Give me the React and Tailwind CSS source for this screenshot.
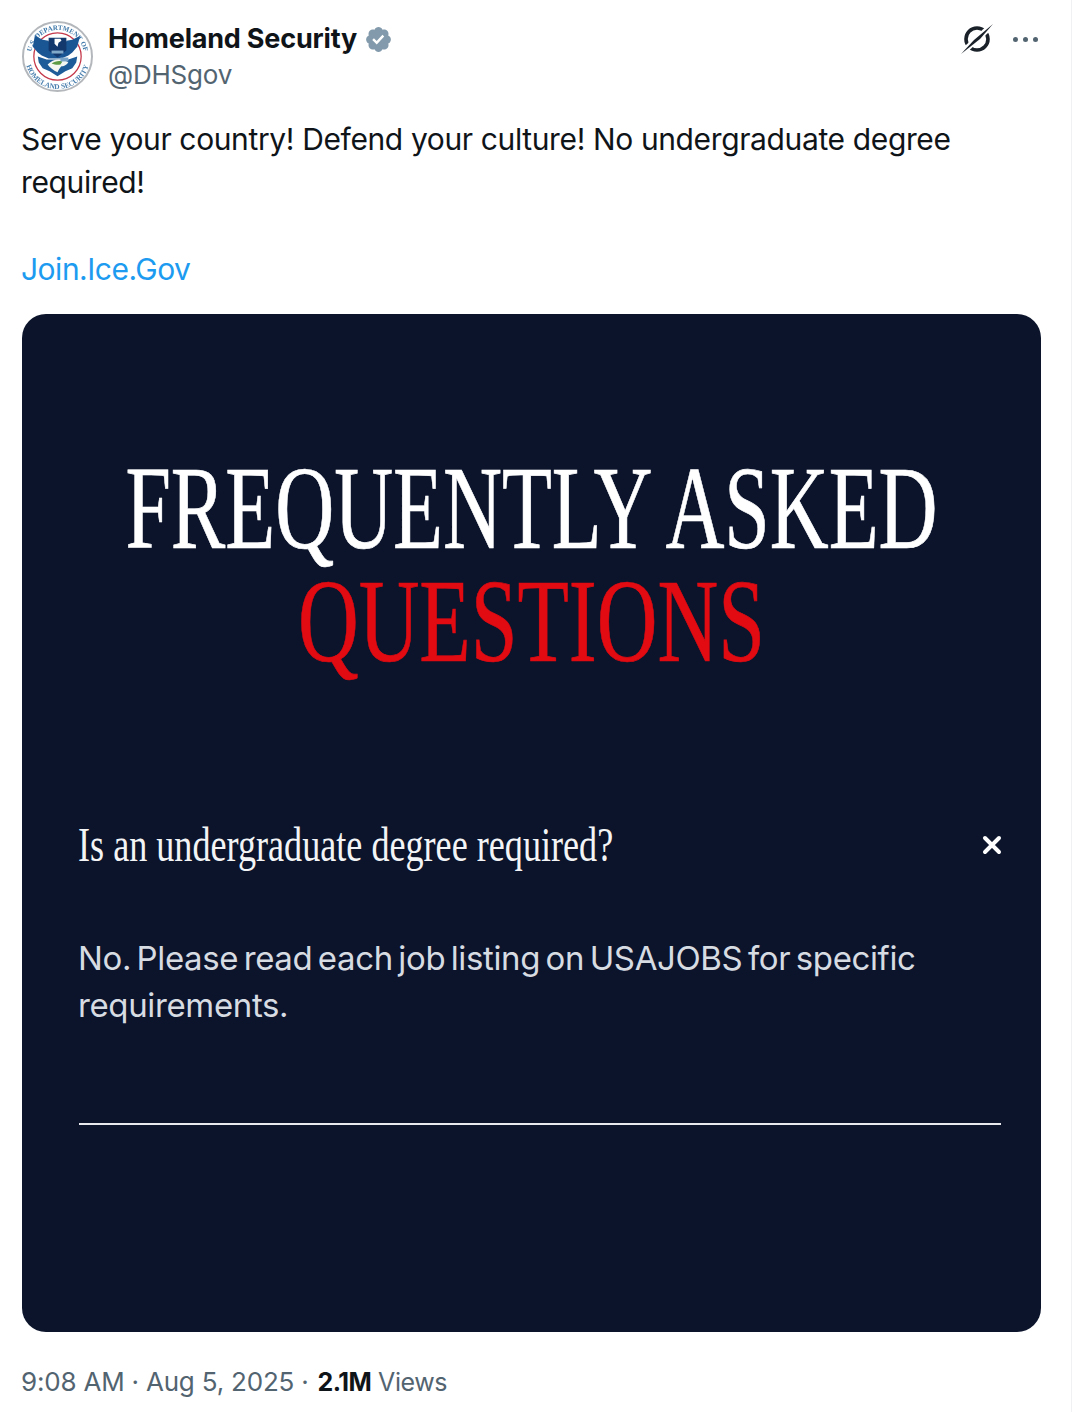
const Seal = () => (
  <svg viewBox="0 0 72 72" className="w-[71px] h-[71px] shrink-0 blur-[0.3px]">
    <circle cx="36" cy="36" r="35" fill="#fff" stroke="#b4b8bc" strokeWidth="2" />
    <circle cx="36" cy="36" r="24" fill="#fff" stroke="#c4384a" strokeWidth="1.3" />
    <defs>
      <path id="sealTop" d="M9 36a27 27 0 0 1 54 0" />
      <path id="sealBottom" d="M3 36a33 33 0 0 0 66 0" />
    </defs>
    <text fontSize="7" fontWeight="700" fill="#3c76a8" fontFamily="Liberation Serif, serif">
      <textPath href="#sealTop" startOffset="50%" textAnchor="middle">U.S. DEPARTMENT OF</textPath>
    </text>
    <text fontSize="7.4" fontWeight="700" fill="#4a7fae" fontFamily="Liberation Serif, serif">
      <textPath href="#sealBottom" startOffset="50%" textAnchor="middle">HOMELAND SECURITY</textPath>
    </text>
    {/* eagle wings */}
    <path d="M13 15l8 4 6 1 2 8h14l2-8 6-1 8-4-3 11-5 6-4 3-7 3h-13l-7-3-4-3-5-6z" fill="#1b5694" />
    <path d="M27 17h18v13l-9 7-9-7z" fill="#12386e" />
    <path d="M33 18h6l1 2-3 2-1 4-3-3z" fill="#fff" />
    <path d="M30 30h12v3h-12z" fill="#7fa8c9" />
    {/* lower shield */}
    <path d="M16 36l9 3h22l9-3-1 6-4 6-7 3-8 5-8-5-7-3-4-6z" fill="#1d5c98" />
    <path d="M26 44c3-3 7-5 11-5 4 0 8 1 10 3-2 3-5 4-7 4-2 2-3 4-4 6-4-2-8-5-10-8z" fill="#f4f6f2" />
    <path d="M30 43c3-2 7-3 11-2l-2 3c-3 1-6 0-9-1z" fill="#5d9a45" />
    <path d="M39 37h8v4h-8z" fill="#7aa3c8" />
  </svg>
);

const Verified = () => (
  <svg viewBox="0 0 22 22" className="w-[29px] h-[29px] shrink-0">
    <path
      fill="#829aab"
      d="M20.396 11c-.018-.646-.215-1.275-.57-1.816-.354-.54-.852-.972-1.438-1.246.223-.607.27-1.264.14-1.897-.131-.634-.437-1.218-.882-1.687-.47-.445-1.053-.75-1.687-.882-.633-.13-1.29-.083-1.897.14-.273-.587-.704-1.086-1.245-1.44S11.647 1.62 11 1.604c-.646.017-1.273.213-1.813.568s-.969.854-1.24 1.44c-.608-.223-1.267-.272-1.902-.14-.635.13-1.22.436-1.69.882-.445.47-.749 1.055-.878 1.688-.13.633-.08 1.29.144 1.896-.587.274-1.087.705-1.443 1.245-.356.54-.555 1.17-.574 1.817.02.647.218 1.276.574 1.817.356.54.856.972 1.443 1.245-.224.606-.274 1.263-.144 1.896.13.634.433 1.218.877 1.688.47.443 1.054.747 1.687.878.633.132 1.29.084 1.897-.136.274.586.705 1.084 1.246 1.439.54.354 1.17.551 1.816.569.647-.016 1.276-.213 1.817-.567s.972-.854 1.245-1.44c.604.239 1.266.296 1.903.164.636-.132 1.22-.447 1.68-.907.46-.46.776-1.044.908-1.681s.075-1.299-.165-1.903c.586-.274 1.084-.705 1.439-1.246.354-.54.551-1.17.569-1.816z"
    />
    <path fill="#fff" d="M9.662 14.85l-3.429-3.428 1.293-1.302 2.072 2.072 4.4-4.794 1.347 1.246z" />
  </svg>
);

const SlashedRing = () => (
  <svg viewBox="0 0 36 36" className="w-[36px] h-[36px]">
    <circle cx="18" cy="18" r="11" fill="none" stroke="#1a2129" strokeWidth="3.6" />
    <path d="M5 30L31 6" stroke="#fff" strokeWidth="6" />
    <path d="M2 33L15 19 34 3 21 18z" fill="#1a2129" />
  </svg>
);

const App = () => {
  return (
    <div className="w-[1078px] h-[1412px] bg-white overflow-hidden font-['Inter',sans-serif]">
      <div className="w-[1072px] h-[1412px] border-r border-[#eff1f3] pl-[22px] pt-[21px]">
        {/* header */}
        <div className="flex items-start">
          <Seal />
          <div className="ml-[15px] flex-1">
            <div className="flex items-center h-[36px]">
              <span className="text-[27px] font-bold text-[#0f1419] tracking-[-0.2px] leading-[36px]">Homeland Security</span>
              <span className="ml-[7px]">
                <Verified />
              </span>
            </div>
            <div className="text-[26px] leading-[36px] text-[#536471] tracking-[-0.2px]">@DHSgov</div>
          </div>
          <div className="flex items-center mr-[33px]">
            <SlashedRing />
            <div className="flex gap-[5px] ml-[18px]">
              <span className="w-[5px] h-[5px] rounded-full bg-[#536471]" />
              <span className="w-[5px] h-[5px] rounded-full bg-[#536471]" />
              <span className="w-[5px] h-[5px] rounded-full bg-[#536471]" />
            </div>
          </div>
        </div>

        {/* tweet text */}
        <div className="mt-[25px] -ml-[1px] text-[30px] leading-[43px] text-[#0f1419] tracking-[-0.37px] whitespace-nowrap">
          <p>Serve your country! Defend your culture! No undergraduate degree</p>
          <p>required!</p>
          <p className="mt-[44px] text-[#1d9bf0] tracking-[-0.5px]">Join.Ice.Gov</p>
        </div>

        {/* image card */}
        <div className="mt-[23px] w-[1019px] h-[1018px] rounded-[24px] bg-[#0b142b] overflow-hidden pt-[138px] pl-[57px] pr-[40px]">
          <div className="font-['Liberation_Serif',serif] leading-[113px] -ml-[57px] -mr-[40px] text-center">
            <div className="text-[118px] text-white scale-x-[0.692] whitespace-nowrap flex justify-center [-webkit-text-stroke:0.7px_white]">FREQUENTLY ASKED</div>
            <div className="text-[118px] text-[#e20b12] scale-x-[0.7126] whitespace-nowrap flex justify-center [-webkit-text-stroke:0.7px_#e20b12]">QUESTIONS</div>
          </div>
          <div className="mt-[137px] flex items-center justify-between h-[60px]">
            <div className="font-['Liberation_Serif',serif] text-[48px] text-[#f3f4f6] origin-left scale-x-[0.753] -translate-x-[1px] whitespace-nowrap">Is an undergraduate degree required?</div>
            <svg viewBox="0 0 20 20" className="w-[20px] h-[20px] translate-x-[1px]">
              <path d="M3 3l14 14M17 3L3 17" stroke="#fff" strokeWidth="4" strokeLinecap="round" />
            </svg>
          </div>
          <div className="mt-[60px] -ml-[1px] text-[33px] leading-[47px] text-[#d7dbe2] tracking-[-0.37px] [word-spacing:-3.4px] whitespace-nowrap">
            <p>No. Please read each job listing on USAJOBS for specific</p>
            <p>requirements.</p>
          </div>
          <div className="mt-[94px] h-[2px] bg-[#e8eaee]" />
        </div>

        {/* footer */}
        <div className="mt-[31px] -ml-[1px] flex items-center text-[#536471] leading-[38px] whitespace-nowrap">
          <span className="text-[26px] tracking-[-0.2px]">9:08 AM · Aug 5, 2025 ·</span>
          <span className="ml-[9px] text-[25px] font-bold text-[#0f1419] tracking-[-0.6px]">2.1M</span>
          <span className="ml-[7px] text-[25px] tracking-[-0.4px]">Views</span>
        </div>
      </div>
    </div>
  );
};

export default App;
